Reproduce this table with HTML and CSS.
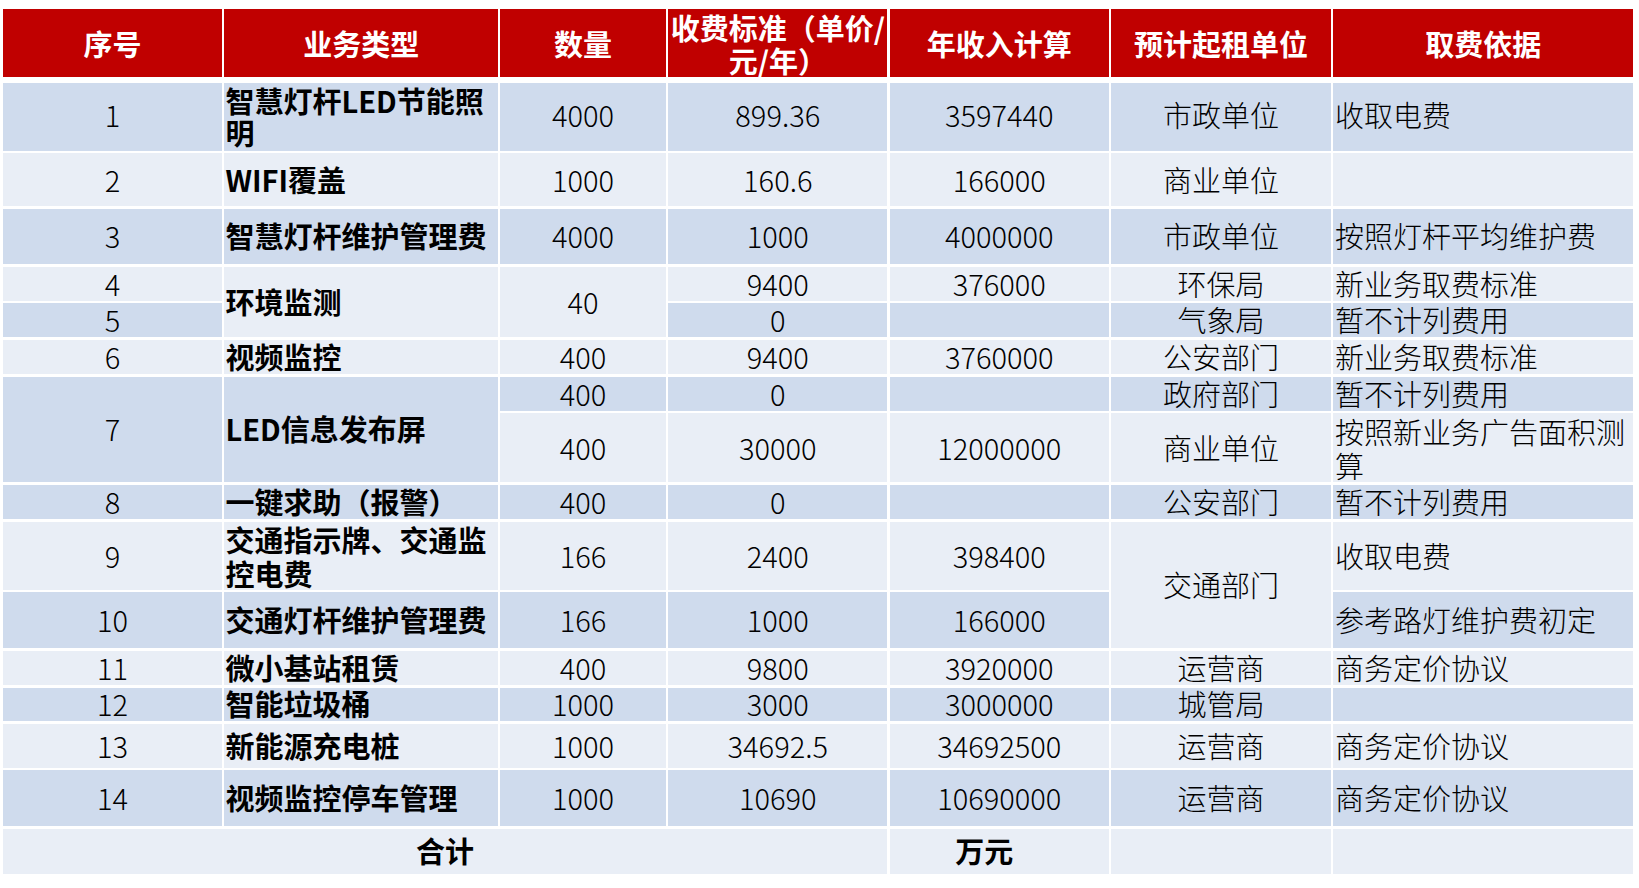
FILE: index.html
```html
<!DOCTYPE html>
<html lang="zh-CN">
<head>
<meta charset="utf-8">
<title>业务收费表</title>
<link rel="stylesheet" href="styles.css">
</head>
<body>
<div class="sheet">
  <div class="thead">
    <div class="th">序号</div>
    <div class="th">业务类型</div>
    <div class="th">数量</div>
    <div class="th">收费标准（单价/<br>元/年）</div>
    <div class="th">年收入计算</div>
    <div class="th">预计起租单位</div>
    <div class="th">取费依据</div>
  </div>
  <div class="tbody">
    <!-- 1 -->
    <div class="c d r1">1</div>
    <div class="b d tight">智慧灯杆LED节能照明</div>
    <div class="c d r1">4000</div>
    <div class="c d r1">899.36</div>
    <div class="c d r1">3597440</div>
    <div class="c d r1">市政单位</div>
    <div class="l d r1">收取电费</div>
    <!-- 2 -->
    <div class="c w">2</div>
    <div class="b w">WIFI覆盖</div>
    <div class="c w">1000</div>
    <div class="c w">160.6</div>
    <div class="c w">166000</div>
    <div class="c w">商业单位</div>
    <div class="l w"></div>
    <!-- 3 -->
    <div class="c d">3</div>
    <div class="b d">智慧灯杆维护管理费</div>
    <div class="c d">4000</div>
    <div class="c d">1000</div>
    <div class="c d">4000000</div>
    <div class="c d">市政单位</div>
    <div class="l d">按照灯杆平均维护费</div>
    <!-- 4 -->
    <div class="c w">4</div>
    <div class="b w rs2">环境监测</div>
    <div class="c w rs2">40</div>
    <div class="c w">9400</div>
    <div class="c w">376000</div>
    <div class="c w">环保局</div>
    <div class="l w">新业务取费标准</div>
    <!-- 5 -->
    <div class="c d">5</div>
    <div class="c d">0</div>
    <div class="c d"></div>
    <div class="c d">气象局</div>
    <div class="l d">暂不计列费用</div>
    <!-- 6 -->
    <div class="c w">6</div>
    <div class="b w">视频监控</div>
    <div class="c w">400</div>
    <div class="c w">9400</div>
    <div class="c w">3760000</div>
    <div class="c w">公安部门</div>
    <div class="l w">新业务取费标准</div>
    <!-- 7a -->
    <div class="c d rs2">7</div>
    <div class="b d rs2">LED信息发布屏</div>
    <div class="c d">400</div>
    <div class="c d">0</div>
    <div class="c d"></div>
    <div class="c d">政府部门</div>
    <div class="l d">暂不计列费用</div>
    <!-- 7b -->
    <div class="c w">400</div>
    <div class="c w">30000</div>
    <div class="c w">12000000</div>
    <div class="c w">商业单位</div>
    <div class="l w wide">按照新业务广告面积测算</div>
    <!-- 8 -->
    <div class="c d">8</div>
    <div class="b d">一键求助（报警）</div>
    <div class="c d">400</div>
    <div class="c d">0</div>
    <div class="c d"></div>
    <div class="c d">公安部门</div>
    <div class="l d">暂不计列费用</div>
    <!-- 9 -->
    <div class="c w">9</div>
    <div class="b w wide">交通指示牌、交通监控电费</div>
    <div class="c w">166</div>
    <div class="c w">2400</div>
    <div class="c w">398400</div>
    <div class="c w rs2">交通部门</div>
    <div class="l w">收取电费</div>
    <!-- 10 -->
    <div class="c d">10</div>
    <div class="b d">交通灯杆维护管理费</div>
    <div class="c d">166</div>
    <div class="c d">1000</div>
    <div class="c d">166000</div>
    <div class="l d">参考路灯维护费初定</div>
    <!-- 11 -->
    <div class="c w">11</div>
    <div class="b w">微小基站租赁</div>
    <div class="c w">400</div>
    <div class="c w">9800</div>
    <div class="c w">3920000</div>
    <div class="c w">运营商</div>
    <div class="l w">商务定价协议</div>
    <!-- 12 -->
    <div class="c d">12</div>
    <div class="b d">智能垃圾桶</div>
    <div class="c d">1000</div>
    <div class="c d">3000</div>
    <div class="c d">3000000</div>
    <div class="c d">城管局</div>
    <div class="l d"></div>
    <!-- 13 -->
    <div class="c w">13</div>
    <div class="b w">新能源充电桩</div>
    <div class="c w">1000</div>
    <div class="c w">34692.5</div>
    <div class="c w">34692500</div>
    <div class="c w">运营商</div>
    <div class="l w">商务定价协议</div>
    <!-- 14 -->
    <div class="c d">14</div>
    <div class="b d">视频监控停车管理</div>
    <div class="c d">1000</div>
    <div class="c d">10690</div>
    <div class="c d">10690000</div>
    <div class="c d">运营商</div>
    <div class="l d">商务定价协议</div>
    <!-- total -->
    <div class="c w bold cs4">合计</div>
    <div class="c w bold unit">万元</div>
    <div class="c w"></div>
    <div class="l w"></div>
  </div>
</div>
</body>
</html>
```
FILE: styles.css
```css
html, body {
  margin: 0;
  padding: 0;
  background: #ffffff;
}

body {
  font-family: "Noto Sans CJK SC", "Noto Sans", sans-serif;
  font-size: 29px;
  color: #000000;
}

.sheet {
  padding: 9.3px 0 0 2.7px;
  width: 1630px;
}

.thead,
.tbody {
  display: grid;
  grid-template-columns: 219.6px 273.6px 165.7px 219.3px 219.4px 219.6px 300.4px;
  column-gap: 2.2px;
}

.thead {
  grid-template-rows: 67.5px;
  margin-bottom: 6.5px;
}

.th {
  background: #c00000;
  color: #ffffff;
  font-weight: 700;
  line-height: 32.5px;
  display: flex;
  align-items: center;
  justify-content: center;
  text-align: center;
  padding-top: 1px;
  box-sizing: border-box;
  white-space: nowrap;
}

.tbody {
  grid-template-rows: 67.4px 52.7px 55.3px 34px 34px 34px 34px 69px 34px 68px 56px 34px 33.3px 44px 56.2px 44.7px;
  row-gap: 2.67px;
}

.tbody > div {
  display: flex;
  align-items: center;
  line-height: 32px;
  box-sizing: border-box;
  padding: 0 1px 2px 1px;
}

.d { background: #cfdbed; }
.w { background: #e9eef6; }

.c {
  justify-content: center;
  text-align: center;
  font-weight: 300;
}

.l {
  justify-content: flex-start;
  text-align: left;
  font-weight: 300;
  padding-left: 2px !important;
}

.b {
  justify-content: flex-start;
  text-align: left;
  font-weight: 700;
}

.tight { line-height: 32px; }

.tbody > .r1 { padding-bottom: 5px; }

.tbody > .wide { line-height: 34px; padding-bottom: 0; }

.bold { font-weight: 700; }

.rs2 { grid-row: span 2; }
.cs4 { grid-column: span 4; }

.tbody > .unit { padding-right: 31px; }
```
